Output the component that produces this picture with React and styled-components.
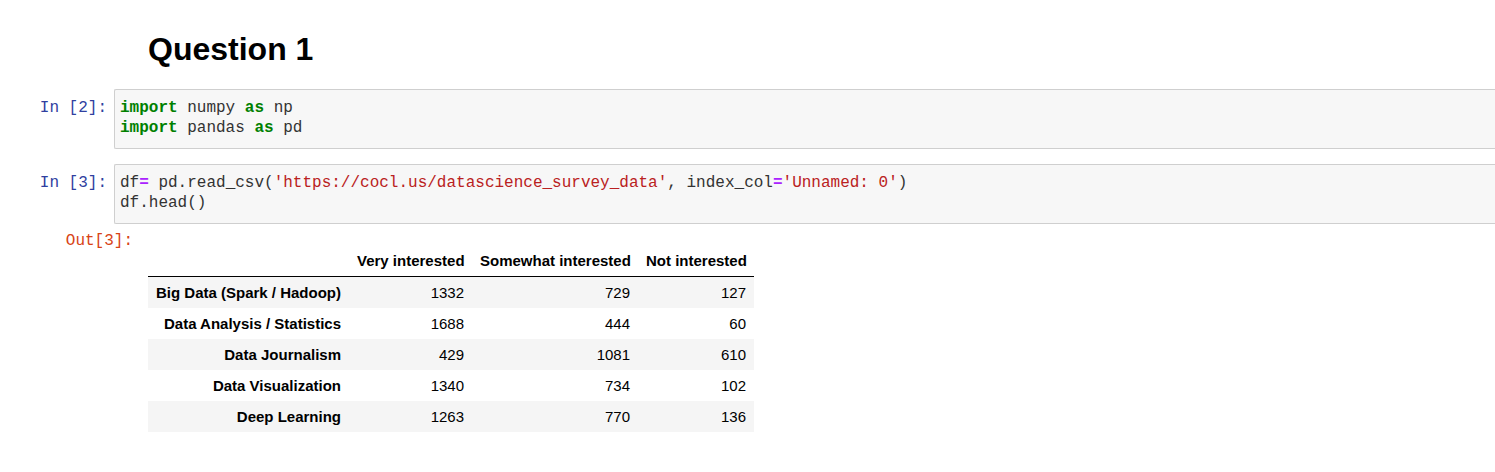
import React from 'react';
import styled, { createGlobalStyle } from 'styled-components';

const GlobalStyle = createGlobalStyle`
  html, body {
    margin: 0;
    padding: 0;
    background: #fff;
    overflow: hidden;
  }
  body {
    font-family: "Liberation Sans", Arial, sans-serif;
    color: #000;
  }
`;

const Notebook = styled.div`
  display: flex;
  flex-direction: column;
  padding-top: 31px;
`;

const Heading = styled.h1`
  margin: 0 0 21px 148px;
  font-size: 32px;
  font-weight: bold;
  line-height: 37px;
  color: #000;
`;

const Cell = styled.div`
  display: flex;
  align-items: flex-start;
  margin-bottom: ${({ $gap }) => $gap}px;
`;

const Prompt = styled.div`
  flex: 0 0 ${({ $width }) => $width}px;
  box-sizing: border-box;
  padding-right: ${({ $pad }) => $pad}px;
  padding-top: ${({ $top }) => $top}px;
  text-align: right;
  font-family: "Liberation Mono", "DejaVu Sans Mono", monospace;
  font-size: 16px;
  line-height: 20px;
  color: ${({ $out }) => ($out ? '#D84315' : '#303F9F')};
  white-space: pre;
`;

const CodeBox = styled.pre`
  flex: 1;
  margin: 0;
  padding: 8px 5px 10px;
  background: #f7f7f7;
  border: 1px solid #cfcfcf;
  border-right: none;
  border-radius: 2px 0 0 2px;
  font-family: "Liberation Mono", "DejaVu Sans Mono", monospace;
  font-size: 16px;
  line-height: 20px;
  color: #333;
`;

const Kw = styled.span`
  color: #008000;
  font-weight: bold;
`;

const Str = styled.span`
  color: #BA2121;
`;

const Op = styled.span`
  color: #AA22FF;
  font-weight: bold;
`;

const OutputArea = styled.div`
  padding: 14px 0 0 15px;
`;

const DataTable = styled.table`
  width: 606px;
  border-collapse: collapse;
  border-spacing: 0;
  table-layout: fixed;
  font-size: 15px;
  color: #000;
`;

const HeadCell = styled.th`
  height: 31px;
  padding: 0 8px;
  text-align: right;
  font-weight: bold;
  border-bottom: 1px solid #000;
  white-space: nowrap;
`;

const Row = styled.tr`
  background: ${({ $striped }) => ($striped ? '#f5f5f5' : '#fff')};
`;

const IndexCell = styled.th`
  height: 31px;
  padding: 0 8px;
  text-align: right;
  font-weight: bold;
  white-space: nowrap;
`;

const ValueCell = styled.td`
  height: 31px;
  padding: 0 8px;
  text-align: right;
  white-space: nowrap;
`;

const columns = ['Very interested', 'Somewhat interested', 'Not interested'];
const widths = [201, 123, 166, 116];

const rows = [
  ['Big Data (Spark / Hadoop)', 1332, 729, 127],
  ['Data Analysis / Statistics', 1688, 444, 60],
  ['Data Journalism', 429, 1081, 610],
  ['Data Visualization', 1340, 734, 102],
  ['Deep Learning', 1263, 770, 136],
];

const App = () => (
  <>
    <GlobalStyle />
    <Notebook>
      <Heading>Question 1</Heading>

      <Cell $gap={15}>
        <Prompt $width={114} $pad={7} $top={9}>In [2]:</Prompt>
        <CodeBox>
          <Kw>import</Kw> numpy <Kw>as</Kw> np{'\n'}
          <Kw>import</Kw> pandas <Kw>as</Kw> pd
        </CodeBox>
      </Cell>

      <Cell $gap={7}>
        <Prompt $width={114} $pad={7} $top={9}>In [3]:</Prompt>
        <CodeBox>
          df<Op>=</Op> pd.read_csv(<Str>'https://cocl.us/datascience_survey_data'</Str>, index_col<Op>=</Op><Str>'Unnamed: 0'</Str>){'\n'}
          df.head()
        </CodeBox>
      </Cell>

      <Cell $gap={0}>
        <Prompt $width={133} $pad={0} $top={0} $out>Out[3]:</Prompt>
        <OutputArea>
          <DataTable>
            <colgroup>
              {widths.map((w, i) => (
                <col key={i} style={{ width: w }} />
              ))}
            </colgroup>
            <thead>
              <tr>
                <HeadCell />
                {columns.map((c) => (
                  <HeadCell key={c}>{c}</HeadCell>
                ))}
              </tr>
            </thead>
            <tbody>
              {rows.map(([label, ...values], i) => (
                <Row key={label} $striped={i % 2 === 0}>
                  <IndexCell>{label}</IndexCell>
                  {values.map((v, j) => (
                    <ValueCell key={j}>{v}</ValueCell>
                  ))}
                </Row>
              ))}
            </tbody>
          </DataTable>
        </OutputArea>
      </Cell>
    </Notebook>
  </>
);

export default App;
